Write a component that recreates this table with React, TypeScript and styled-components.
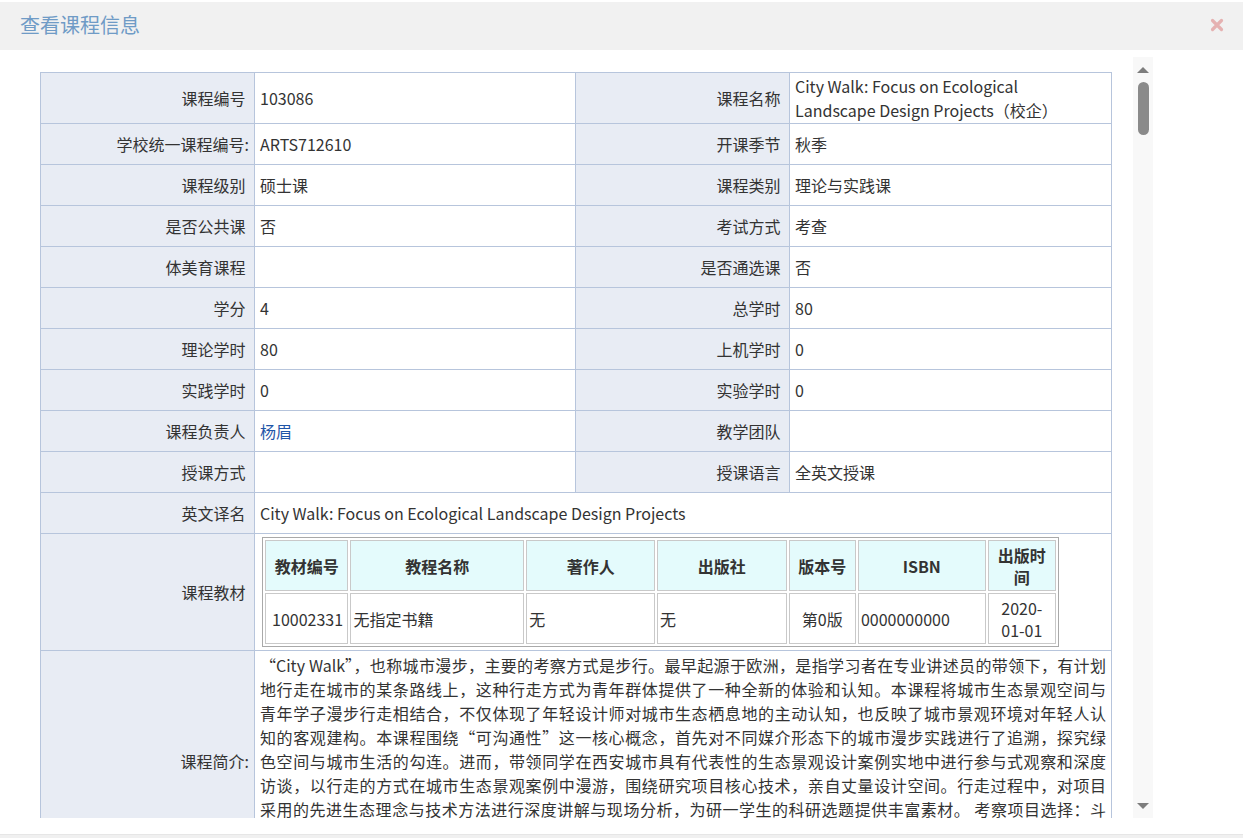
import React from "react";
import styled, { createGlobalStyle } from "styled-components";

const Global = createGlobalStyle`
  html, body { margin: 0; padding: 0; background: #fff; }
  body { font-family: "Noto Sans CJK SC", "Noto Sans", sans-serif; color: #333; overflow: hidden; }
`;

const Dialog = styled.div`
  width: 1243px;
  height: 838px;
  display: flex;
  flex-direction: column;
  background: #fff;
`;

const TitleBar = styled.div`
  margin-top: 2px;
  height: 48px;
  background: #f1f1f1;
  display: flex;
  align-items: center;
  justify-content: space-between;
  padding: 0 18px 3px 20px;
  box-sizing: border-box;
  flex-shrink: 0;
`;

const Title = styled.h1`
  margin: 0;
  font-size: 20px;
  font-weight: 400;
  color: #6f9bc6;
`;

const Close = styled.button`
  border: 0;
  background: transparent;
  padding: 0;
  width: 16px;
  height: 16px;
  display: flex;
  align-items: center;
  justify-content: center;
  cursor: pointer;
`;

const Body = styled.div`
  height: 768px;
  display: flex;
  flex-shrink: 0;
`;

const Viewport = styled.div`
  width: 1133px;
  height: 100%;
  overflow: hidden;
  padding: 22px 0 0 40px;
  box-sizing: border-box;
`;

const Track = styled.div`
  width: 20px;
  margin-top: 7px;
  background: #f8f8f8;
  display: flex;
  flex-direction: column;
  align-items: center;
  padding: 10px 0 9px;
  box-sizing: border-box;
`;

const Arrow = styled.div<{ $down?: boolean }>`
  width: 0;
  height: 0;
  border-left: 6px solid transparent;
  border-right: 6px solid transparent;
  ${(p) => (p.$down ? "border-top: 6px solid #7d7d7d;" : "border-bottom: 6px solid #7d7d7d;")}
`;

const Thumb = styled.div`
  width: 11px;
  height: 53px;
  margin-top: 9px;
  border-radius: 6px;
  background: #8a8a8a;
`;

const TrackFill = styled.div`
  flex: 1;
`;

const Footer = styled.div`
  flex: 1;
  display: flex;
  flex-direction: column;
  justify-content: flex-end;
`;

const FooterBar = styled.div`
  height: 3px;
  background: #f0f0f0;
  border-top: 1px solid #e6e6e6;
`;

const InfoTable = styled.table`
  width: 1071px;
  border-collapse: collapse;
  table-layout: fixed;
  font-size: 16px;
  line-height: 24px;
`;

const Label = styled.th`
  background: #e8ecf4;
  border: 1px solid #b7c5dc;
  font-weight: 400;
  text-align: right;
  padding: 1px 5px;
  height: 38px;
  color: #333;
  vertical-align: middle;
  white-space: nowrap;
`;

const Value = styled.td<{ $tight?: boolean }>`
  border: 1px solid #b7c5dc;
  padding: ${(p) => (p.$tight ? "3px 5px" : "1px 12px 1px 5px")};
  height: 38px;
  text-align: left;
  vertical-align: middle;
  color: #333;
`;

const Link = styled.a`
  color: #1f56a8;
  text-decoration: none;
`;

const Intro = styled.div`
  margin: -1px 0;
`;

const IntroLine = styled.span<{ $last?: boolean }>`
  display: block;
  text-align: justify;
  text-align-last: ${(p) => (p.$last ? "left" : "justify")};
`;

const BookTable = styled.table`
  width: 797px;
  table-layout: fixed;
  border: 1px solid #a9a9a9;
  border-spacing: 2px;
  margin-left: 2px;
  font-size: 16px;
  line-height: 22px;
`;

const BookHead = styled.th`
  background: #e4fbfc;
  border: 1px solid #c9c9c9;
  font-weight: 700;
  color: #333;
  padding: 3px 6px 2px;
  text-align: center;
  vertical-align: middle;
`;

const BookCell = styled.td<{ $center?: boolean }>`
  border: 1px solid #c9c9c9;
  padding: 3px ${(p) => (p.$center ? "6px" : "2px")} 2px;
  text-align: ${(p) => (p.$center ? "center" : "left")};
  vertical-align: middle;
  color: #333;
`;

const CloseIcon = () => (
  <svg width="14" height="14" viewBox="0 0 14 14">
    <path d="M2.5 2.5 L11.5 11.5 M11.5 2.5 L2.5 11.5" stroke="#e5b1b1" strokeWidth="3.2" strokeLinecap="round" />
  </svg>
);

const pairs: [string, React.ReactNode, string, React.ReactNode][] = [
  ["学校统一课程编号:", "ARTS712610", "开课季节", "秋季"],
  ["课程级别", "硕士课", "课程类别", "理论与实践课"],
  ["是否公共课", "否", "考试方式", "考查"],
  ["体美育课程", "", "是否通选课", "否"],
  ["学分", "4", "总学时", "80"],
  ["理论学时", "80", "上机学时", "0"],
  ["实践学时", "0", "实验学时", "0"],
  ["课程负责人", <Link href="#">杨眉</Link>, "教学团队", ""],
  ["授课方式", "", "授课语言", "全英文授课"],
];

const lab = (s: string) => (s.endsWith(":") ? s : s + "\u00a0");

const introLines = [
  "“City Walk”，也称城市漫步，主要的考察方式是步行。最早起源于欧洲，是指学习者在专业讲述员的带领下，有计划",
  "地行走在城市的某条路线上，这种行走方式为青年群体提供了一种全新的体验和认知。本课程将城市生态景观空间与",
  "青年学子漫步行走相结合，不仅体现了年轻设计师对城市生态栖息地的主动认知，也反映了城市景观环境对年轻人认",
  "知的客观建构。本课程围绕“可沟通性”这一核心概念，首先对不同媒介形态下的城市漫步实践进行了追溯，探究绿",
  "色空间与城市生活的勾连。进而，带领同学在西安城市具有代表性的生态景观设计案例实地中进行参与式观察和深度",
  "访谈，以行走的方式在城市生态景观案例中漫游，围绕研究项目核心技术，亲自丈量设计空间。行走过程中，对项目",
  "采用的先进生态理念与技术方法进行深度讲解与现场分析，为研一学生的科研选题提供丰富素材。 考察项目选择：斗",
  "门水库生态修复项目、西安浐灞国家湿地公园、大明宫国家遗址公园、曲江池遗址公园、西安城墙环城公园等具有代",
  "表性的城市生态景观案例。",
];

export default function App() {
  return (
    <>
      <Global />
      <Dialog>
        <TitleBar>
          <Title>查看课程信息</Title>
          <Close aria-label="关闭">
            <CloseIcon />
          </Close>
        </TitleBar>
        <Body>
          <Viewport>
            <InfoTable>
              <colgroup>
                <col style={{ width: 214 }} />
                <col style={{ width: 321 }} />
                <col style={{ width: 214 }} />
                <col style={{ width: 322 }} />
              </colgroup>
              <tbody>
                <tr>
                  <Label>{lab("课程编号")}</Label>
                  <Value>103086</Value>
                  <Label>{lab("课程名称")}</Label>
                  <Value>City Walk: Focus on Ecological Landscape Design Projects（校企）</Value>
                </tr>
                {pairs.map(([a, b, c, d]) => (
                  <tr key={a}>
                    <Label>{lab(a)}</Label>
                    <Value>{b}</Value>
                    <Label>{lab(c)}</Label>
                    <Value>{d}</Value>
                  </tr>
                ))}
                <tr>
                  <Label>{lab("英文译名")}</Label>
                  <Value colSpan={3}>City Walk: Focus on Ecological Landscape Design Projects</Value>
                </tr>
                <tr>
                  <Label>{lab("课程教材")}</Label>
                  <Value colSpan={3} $tight>
                    <BookTable>
                      <colgroup>
                        <col style={{ width: 83 }} />
                        <col style={{ width: 173 }} />
                        <col style={{ width: 128 }} />
                        <col style={{ width: 129 }} />
                        <col style={{ width: 67 }} />
                        <col style={{ width: 127 }} />
                        <col style={{ width: 68 }} />
                      </colgroup>
                      <thead>
                        <tr>
                          <BookHead>教材编号</BookHead>
                          <BookHead>教程名称</BookHead>
                          <BookHead>著作人</BookHead>
                          <BookHead>出版社</BookHead>
                          <BookHead>版本号</BookHead>
                          <BookHead>ISBN</BookHead>
                          <BookHead>出版时间</BookHead>
                        </tr>
                      </thead>
                      <tbody>
                        <tr>
                          <BookCell $center>10002331</BookCell>
                          <BookCell>无指定书籍</BookCell>
                          <BookCell>无</BookCell>
                          <BookCell>无</BookCell>
                          <BookCell $center>第0版</BookCell>
                          <BookCell>0000000000</BookCell>
                          <BookCell $center>2020-01-01</BookCell>
                        </tr>
                      </tbody>
                    </BookTable>
                  </Value>
                </tr>
                <tr>
                  <Label>课程简介:</Label>
                  <Value colSpan={3} $tight>
                    <Intro>
                      {introLines.map((l, i) => (
                        <IntroLine key={i} $last={i === introLines.length - 1}>
                          {l}
                        </IntroLine>
                      ))}
                    </Intro>
                  </Value>
                </tr>
              </tbody>
            </InfoTable>
          </Viewport>
          <Track>
            <Arrow />
            <Thumb />
            <TrackFill />
            <Arrow $down />
          </Track>
        </Body>
        <Footer>
          <FooterBar />
        </Footer>
      </Dialog>
    </>
  );
}
